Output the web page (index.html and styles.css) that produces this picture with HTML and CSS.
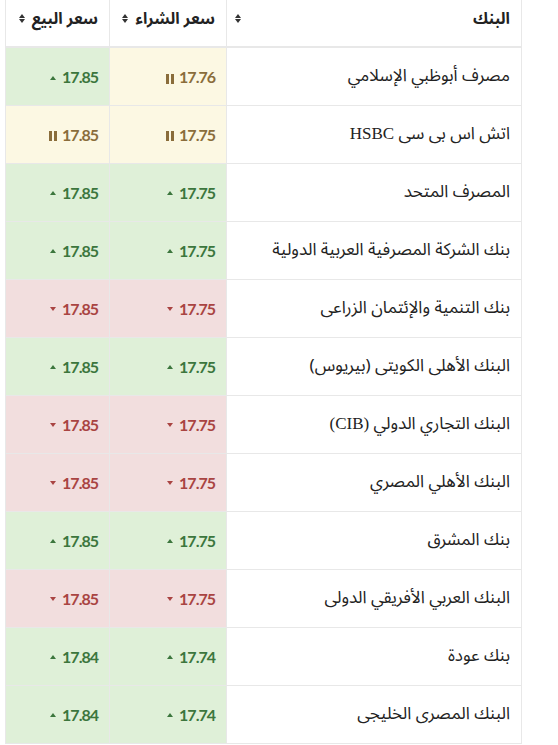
FILE: index.html
```html
<!DOCTYPE html>
<html lang="ar" dir="rtl">
<head>
<meta charset="utf-8">
<link rel="stylesheet" href="styles.css">
</head>
<body>
<div class="wrap">
<table class="rates">
<colgroup>
<col class="c-bank">
<col class="c-buy">
<col class="c-sell">
</colgroup>
<thead>
<tr>
<th class="bank-h"><span class="htext">البنك</span><span class="sort sort-end"></span></th>
<th class="num-h"><span class="htext">سعر الشراء</span><span class="sort"></span></th>
<th class="num-h"><span class="htext">سعر البيع</span><span class="sort"></span></th>
</tr>
</thead>
<tbody>
<tr><td class="bank">مصرف أبوظبي الإسلامي</td><td class="num same"><span class="ic"></span>17.76</td><td class="num up"><span class="ic"></span>17.85</td></tr>
<tr><td class="bank">اتش اس بى سى <span class="latin" lang="en">HSBC</span></td><td class="num same"><span class="ic"></span>17.75</td><td class="num same"><span class="ic"></span>17.85</td></tr>
<tr><td class="bank">المصرف المتحد</td><td class="num up"><span class="ic"></span>17.75</td><td class="num up"><span class="ic"></span>17.85</td></tr>
<tr><td class="bank">بنك الشركة المصرفية العربية الدولية</td><td class="num up"><span class="ic"></span>17.75</td><td class="num up"><span class="ic"></span>17.85</td></tr>
<tr><td class="bank">بنك التنمية والإئتمان الزراعى</td><td class="num down"><span class="ic"></span>17.75</td><td class="num down"><span class="ic"></span>17.85</td></tr>
<tr><td class="bank">البنك الأهلى الكويتى (بيريوس)</td><td class="num up"><span class="ic"></span>17.75</td><td class="num up"><span class="ic"></span>17.85</td></tr>
<tr><td class="bank">البنك التجاري الدولي <span class="latin" lang="en">(CIB)</span></td><td class="num down"><span class="ic"></span>17.75</td><td class="num down"><span class="ic"></span>17.85</td></tr>
<tr><td class="bank">البنك الأهلي المصري</td><td class="num down"><span class="ic"></span>17.75</td><td class="num down"><span class="ic"></span>17.85</td></tr>
<tr><td class="bank">بنك المشرق</td><td class="num up"><span class="ic"></span>17.75</td><td class="num up"><span class="ic"></span>17.85</td></tr>
<tr><td class="bank">البنك العربي الأفريقي الدولى</td><td class="num down"><span class="ic"></span>17.75</td><td class="num down"><span class="ic"></span>17.85</td></tr>
<tr><td class="bank">بنك عودة</td><td class="num up"><span class="ic"></span>17.74</td><td class="num up"><span class="ic"></span>17.84</td></tr>
<tr><td class="bank">البنك المصرى الخليجى</td><td class="num up"><span class="ic"></span>17.74</td><td class="num up"><span class="ic"></span>17.84</td></tr>
</tbody>
</table>
</div>
</body>
</html>
```
FILE: styles.css
```css
html, body {
  margin: 0;
  padding: 0;
  background: #fff;
}
.wrap {
  width: 516px;
  margin-right: 36px;
}
.rates {
  width: 516px;
  border-collapse: collapse;
  table-layout: fixed;
  font-family: "Noto Sans Arabic", "Noto Naskh Arabic", "DejaVu Sans", sans-serif;
  color: #222;
}
.c-bank { width: 295px; }
.c-buy { width: 117px; }
.c-sell { width: 104px; }
.rates th, .rates td {
  border: 1px solid #e8e8e8;
  padding: 0 11px 0 6px;
  text-align: right;
  vertical-align: middle;
  white-space: nowrap;
}
.rates thead tr { height: 47px; }
.rates tbody tr { height: 58px; }
.rates thead th {
  border-top: none;
  border-bottom: 2px solid #e8e8e8;
  font-weight: bold;
  font-size: 16px;
  padding-bottom: 10px;
  color: #222;
}
.bank-h {
  position: relative;
}
.htext { vertical-align: middle; }
.sort {
  display: inline-block;
  vertical-align: middle;
  width: 7px;
  height: 9px;
  margin-right: 6px;
  position: relative;
}
.sort::before, .sort::after {
  content: "";
  position: absolute;
  left: 0;
  border-left: 3.5px solid transparent;
  border-right: 3.5px solid transparent;
}
.sort::before { top: 0; border-bottom: 4px solid #333; }
.sort::after { bottom: 0; border-top: 4px solid #333; }
.sort-end {
  position: absolute;
  left: 8px;
  top: 14px;
  margin: 0;
}
.bank {
  font-size: 17px;
  color: #222;
}
.latin {
  font-family: "Liberation Serif", serif;
  font-size: 17px;
}
.num {
  font-family: Lato, "Liberation Sans", sans-serif;
  font-weight: bold;
  font-size: 16px;
  letter-spacing: -1px;
  direction: ltr;
}
.num .ic {
  display: inline-block;
  vertical-align: middle;
  margin-right: 6px;
  position: relative;
  top: -1px;
}
.up { background: #dff0d8; color: #3c763d; }
.up .ic {
  border-left: 3.5px solid transparent;
  border-right: 3.5px solid transparent;
  border-bottom: 4px solid #3c763d;
}
.down { background: #f2dede; color: #a94442; }
.down .ic {
  border-left: 3.5px solid transparent;
  border-right: 3.5px solid transparent;
  border-top: 4px solid #a94442;
}
.same { background: #fcf8e3; color: #8a6d3b; }
.same .ic {
  height: 10px;
  width: 2px;
  border-left: 3px solid #8a6d3b;
  border-right: 3px solid #8a6d3b;
  margin-right: 5px;
  top: 0;
}
```
